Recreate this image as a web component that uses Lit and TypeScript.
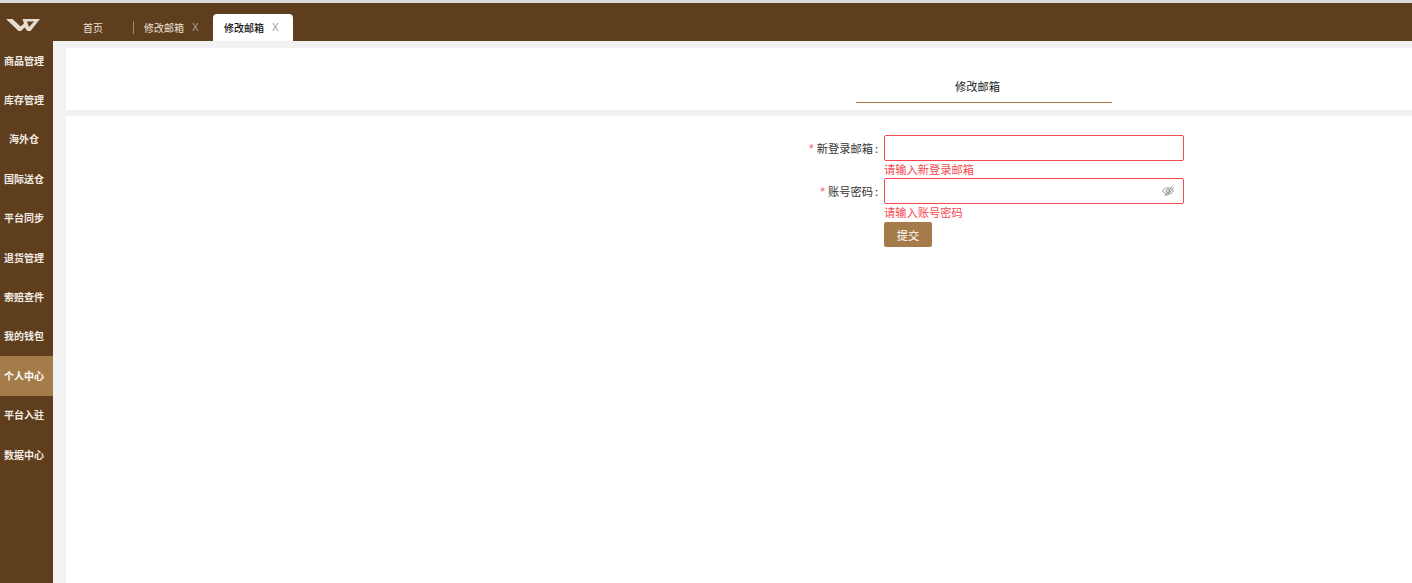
import { LitElement, html, css } from "lit";
import { customElement } from "lit/decorators.js";

const MENU = ["商品管理", "库存管理", "海外仓", "国际送仓", "平台同步", "退货管理", "索赔查件", "我的钱包", "个人中心", "平台入驻", "数据中心"];

@customElement("app-root")
export class AppRoot extends LitElement {
  static styles = css`
    :host {
      display: flex;
      flex-direction: column;
      height: 583px;
      overflow: hidden;
      font-family: "Noto Sans CJK SC", "Noto Sans", sans-serif;
      background: #f2f2f2;
    }
    .strip { height: 3px; background: #dcdad8; flex: none; }
    .header { height: 38px; flex: none; background: #5f3e1e; display: flex; align-items: flex-end; }
    .logo { width: 53px; height: 38px; flex: none; display: flex; justify-content: center; padding-top: 16px; box-sizing: border-box; }
    .logo svg { width: 34px; height: 12px; margin-left: -7px; }
    .tabs { display: flex; align-items: flex-end; padding-left: 10px; }
    .tab { height: 27px; padding-bottom: 1px; display: flex; align-items: center; font-size: 10px; color: #e9e2da; box-sizing: border-box; }
    .home { width: 70px; padding-left: 20px; }
    .edit1 { width: 80px; padding-left: 11px; position: relative; }
    .edit1::before { content: ""; position: absolute; left: 0; top: 7px; height: 13px; width: 1px; background: #a28a6c; }
    .active { width: 80px; padding-left: 11px; background: #fff; color: #111; border-radius: 4px 4px 0 0; font-weight: 500; }
    .x { margin-left: 8px; font-size: 10px; color: #b3a695; font-family: "Liberation Sans", sans-serif; }
    .active .x { color: #999; }
    .body { flex: 1; display: flex; min-height: 0; }
    .side { width: 53px; flex: none; background: #5f3e1e; box-sizing: border-box; }
    .item { height: 39.4px; box-sizing: border-box; padding: 0 5px 1px 0; display: flex; align-items: center; justify-content: center; color: #f2ece5; font-size: 10px; font-weight: 700; white-space: nowrap; }
    .item.on { background: #a57b4a; color: #fff; }
    .main { flex: 1; min-width: 0; padding: 7px 0 0 13px; display: flex; flex-direction: column; gap: 6px; }
    .head { height: 62px; background: #fff; flex: none; padding-left: 790px; box-sizing: border-box; }
    .title { width: 256px; height: 55px; box-sizing: border-box; border-bottom: 1px solid #a57b4a; display: flex; justify-content: center; align-items: flex-end; padding: 0 13px 8px 0; font-size: 11.25px; color: #222; line-height: 16px; }
    .panel { flex: 1; background: #fff; padding: 19px 0 0 0; }
    .row { display: flex; }
    .label { width: 818px; flex: none; box-sizing: border-box; padding-right: 4px; height: 26px; display: flex; align-items: center; justify-content: flex-end; font-size: 11.25px; color: #333; white-space: pre; }
    .star { color: #f56c6c; margin-right: 3px; font-size: 13px; line-height: 1; font-family: "Liberation Sans", sans-serif; }
    .colon { width: 7px; text-align: center; }
    .input { width: 300px; height: 26px; box-sizing: border-box; border: 1px solid #f5484f; border-radius: 2px; background: #fff; display: flex; align-items: center; justify-content: flex-end; padding-right: 9px; }
    .input svg { width: 12px; height: 12px; }
    .err { margin-left: 818px; height: 17px; font-size: 11.25px; line-height: 17px; color: #f5484f; }
    .btn { margin: 1px 0 0 818px; width: 48px; height: 25px; background: #a57b4a; color: #fff; font-size: 11.25px; border-radius: 2px; display: flex; align-items: center; justify-content: center; }
  `;

  render() {
    return html`
      <div class="strip"></div>
      <div class="header">
        <div class="logo">
          <svg viewBox="0 0 34 12">
            <path fill="#e6dccf" fill-rule="evenodd" d="M0 0H6.500L14.500 7.500 18 4.500 16.500 0H34L24.500 12H21.500L18.500 8.500 15 12H12.500ZM21 2.500H28L23 8Z"/>
          </svg>
        </div>
        <div class="tabs">
          <div class="tab home">首页</div>
          <div class="tab edit1">修改邮箱<span class="x">X</span></div>
          <div class="tab active">修改邮箱<span class="x">X</span></div>
        </div>
      </div>
      <div class="body">
        <nav class="side">
          ${MENU.map((m, i) => html`<div class="item ${i === 8 ? "on" : ""}">${m}</div>`)}
        </nav>
        <div class="main">
          <div class="head"><div class="title">修改邮箱</div></div>
          <div class="panel">
            <div class="row">
              <div class="label"><span class="star">*</span>新登录邮箱<span class="colon">:</span></div>
              <div class="input"></div>
            </div>
            <div class="err">请输入新登录邮箱</div>
            <div class="row">
              <div class="label"><span class="star">*</span>账号密码<span class="colon">:</span></div>
              <div class="input">
                <svg viewBox="0 0 24 24" fill="none" stroke="#8a8a8a" stroke-width="1.700">
                  <path d="M1 12C4 7.500 8 5.500 12 5.500s8 2 11 6.500c-3 4.500-7 6.500-11 6.500S4 16.500 1 12z"/>
                  <circle cx="12" cy="12" r="3.500"/>
                  <path d="M5 22L21 2M9 22L24 5"/>
                </svg>
              </div>
            </div>
            <div class="err">请输入账号密码</div>
            <div class="btn">提交</div>
          </div>
        </div>
      </div>
    `;
  }
}
